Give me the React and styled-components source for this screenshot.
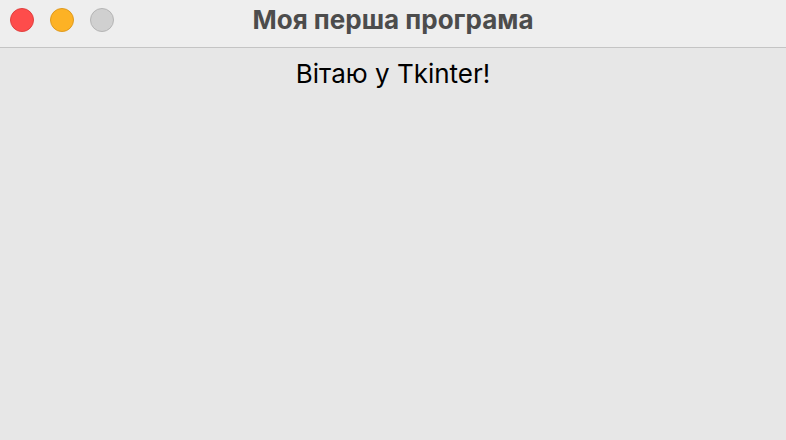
import styled, { createGlobalStyle } from "styled-components";

const GlobalStyle = createGlobalStyle`
  html, body {
    margin: 0;
    padding: 0;
    background: #e7e7e7;
  }
  body {
    font-family: Inter, "Liberation Sans", Arial, sans-serif;
  }
`;

const Window = styled.div`
  display: flex;
  flex-direction: column;
  width: 786px;
  height: 440px;
  background: #e7e7e7;
  overflow: hidden;
`;

const TitleBar = styled.div`
  position: relative;
  display: flex;
  align-items: center;
  justify-content: center;
  height: 47px;
  background: #eeeeee;
  border-bottom: 1px solid #c4c4c4;
  box-sizing: content-box;
`;

const Lights = styled.div`
  position: absolute;
  left: 10px;
  top: 8px;
  display: flex;
  gap: 16px;
`;

const Light = styled.span`
  width: 22px;
  height: 22px;
  border-radius: 50%;
  background: ${(p) => p.color};
  border: 1px solid ${(p) => p.edge};
`;

const Title = styled.h1`
  margin: 0;
  margin-top: -8px;
  font-size: 26px;
  font-weight: 700;
  line-height: 1.2;
  color: #4c4c4c;
`;

const Content = styled.div`
  flex: 1;
  display: flex;
  flex-direction: column;
  align-items: center;
`;

const Label = styled.div`
  margin-top: 10px;
  font-size: 26px;
  line-height: 1.2;
  color: #000000;
`;

export default function App() {
  return (
    <>
      <GlobalStyle />
      <Window>
        <TitleBar>
          <Lights>
            <Light color="#fe4c4b" edge="#e0403f" />
            <Light color="#fdb225" edge="#df9a1e" />
            <Light color="#d0d0d0" edge="#b5b5b5" />
          </Lights>
          <Title>Моя перша програма</Title>
        </TitleBar>
        <Content>
          <Label>Вітаю у Tkinter!</Label>
        </Content>
      </Window>
    </>
  );
}
